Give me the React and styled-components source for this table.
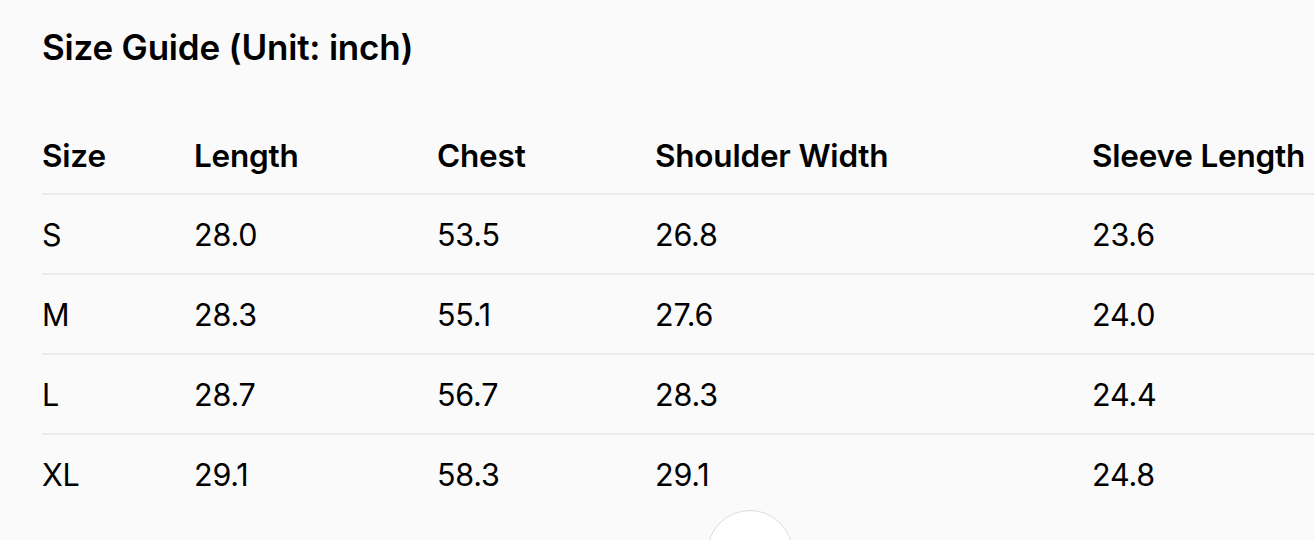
import React from 'react';
import styled, { createGlobalStyle } from 'styled-components';

const GlobalStyle = createGlobalStyle`
  html, body {
    margin: 0;
    padding: 0;
    background: #fafafa;
    overflow: hidden;
  }
  body {
    font-family: Inter, "Liberation Sans", sans-serif;
    color: #000;
  }
`;

const Page = styled.div`
  position: relative;
  width: 1314px;
  height: 540px;
  overflow: hidden;
  padding: 0 0 0 42px;
  box-sizing: border-box;
`;

const Title = styled.h1`
  margin: 0;
  padding-top: 25px;
  font-size: 35px;
  font-weight: 600;
  line-height: 44px;
  letter-spacing: -0.2px;
  white-space: nowrap;
`;

const Table = styled.div`
  margin-top: 66px;
  width: 1600px;
`;

const Row = styled.div`
  display: grid;
  grid-template-columns: 152px 243px 218px 437px 1fr;
  align-items: center;
  height: ${props => (props.head ? '40px' : '78px')};
  padding-bottom: ${props => (props.head ? '18px' : '0')};
  border-bottom: ${props => (props.last ? 'none' : '2px solid #ebebeb')};
  box-sizing: content-box;
`;

const Cell = styled.div`
  font-size: ${props => (props.head ? '31.5px' : '30.5px')};
  font-weight: ${props => (props.head ? 600 : 400)};
  letter-spacing: -0.2px;
  white-space: nowrap;
`;

const FloatButton = styled.div`
  position: absolute;
  left: 707px;
  top: 510px;
  width: 84px;
  height: 84px;
  border-radius: 50%;
  background: #fff;
  border: 1px solid #dcdcdc;
`;

const headers = ['Size', 'Length', 'Chest', 'Shoulder Width', 'Sleeve Length'];
const rows = [
  ['S', '28.0', '53.5', '26.8', '23.6'],
  ['M', '28.3', '55.1', '27.6', '24.0'],
  ['L', '28.7', '56.7', '28.3', '24.4'],
  ['XL', '29.1', '58.3', '29.1', '24.8'],
];

export default function App() {
  return (
    <Page>
      <GlobalStyle />
      <Title>Size Guide (Unit: inch)</Title>
      <Table>
        <Row head>
          {headers.map(h => (
            <Cell head key={h}>{h}</Cell>
          ))}
        </Row>
        {rows.map((r, i) => (
          <Row key={r[0]} last={i === rows.length - 1}>
            {r.map((v, j) => (
              <Cell key={j}>{v}</Cell>
            ))}
          </Row>
        ))}
      </Table>
      <FloatButton />
    </Page>
  );
}
